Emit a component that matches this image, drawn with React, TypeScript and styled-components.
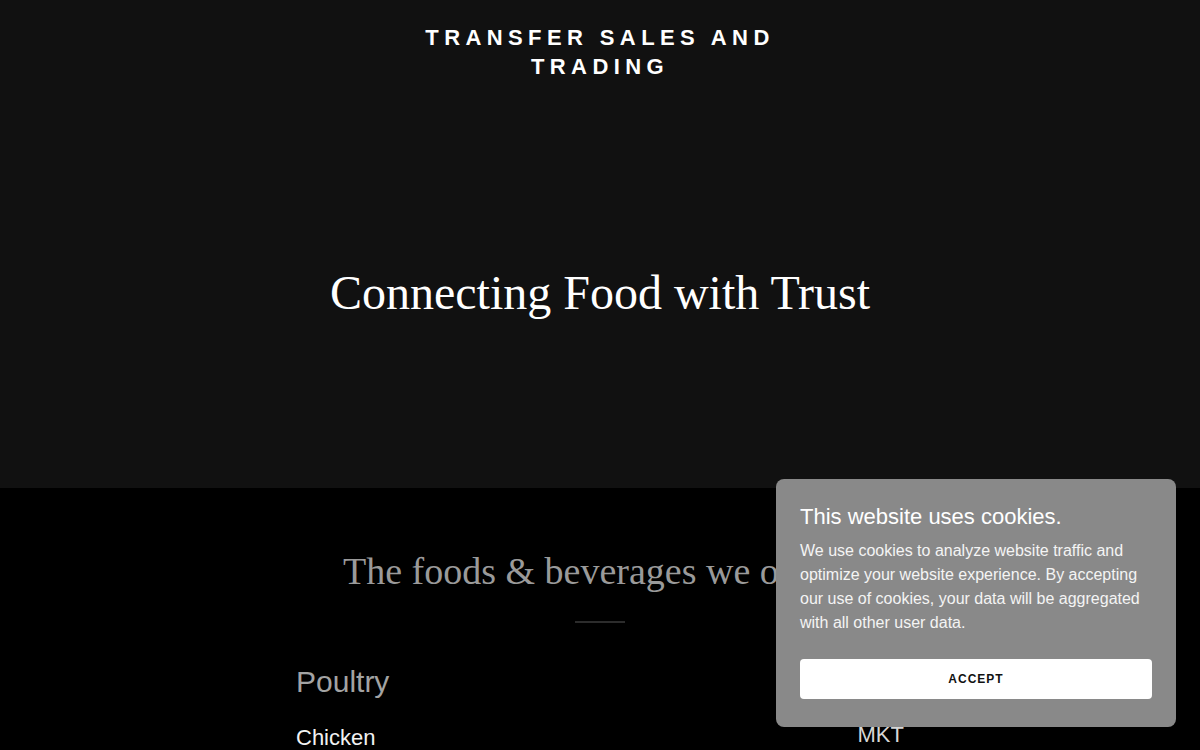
import React from "react";
import styled, { createGlobalStyle } from "styled-components";

const Global = createGlobalStyle`
  html, body { margin: 0; padding: 0; background: #000; }
  body { font-family: "Liberation Sans", Arial, sans-serif; overflow: hidden; }
  * { box-sizing: border-box; }
`;

const Page = styled.div`
  width: 1200px;
  height: 750px;
  overflow: hidden;
  position: relative;
  background: #000;
`;

const Hero = styled.section`
  height: 488px;
  background: #111111;
  display: flex;
  flex-direction: column;
`;

const Header = styled.header`
  padding: 23px 0 17px;
  display: flex;
  justify-content: center;
`;

const Brand = styled.h1`
  margin: 0;
  width: 400px;
  text-align: center;
  font-family: "Liberation Sans", Arial, sans-serif;
  font-weight: 700;
  font-size: 22px;
  line-height: 29px;
  letter-spacing: 5.4px;
  text-transform: uppercase;
  color: #ffffff;
`;

const HeroBody = styled.div`
  flex: 1;
  display: flex;
  align-items: center;
  justify-content: center;
`;

const Tagline = styled.h2`
  margin: 0;
  font-family: "Liberation Serif", "Times New Roman", serif;
  font-weight: 400;
  font-size: 48px;
  line-height: 58px;
  color: #ffffff;
`;

const Menu = styled.section`
  padding-top: 56px;
  display: flex;
  flex-direction: column;
  align-items: center;
`;

const MenuTitle = styled.h2`
  margin: 0;
  padding-right: 24px;
  font-family: "Liberation Serif", "Times New Roman", serif;
  font-weight: 400;
  font-size: 38px;
  line-height: 54px;
  color: #9a9a9a;
  white-space: nowrap;
`;

const Divider = styled.hr`
  width: 50px;
  height: 2px;
  margin: 23px 0 0;
  border: 0;
  background: #2c2c2c;
`;

const MenuBody = styled.div`
  width: 608px;
  margin-top: 41px;
`;

const Category = styled.h3`
  margin: 0;
  font-size: 30px;
  line-height: 36px;
  font-weight: 400;
  color: #a3a3a3;
`;

const Item = styled.div`
  margin-top: 23px;
  display: flex;
  justify-content: space-between;
  align-items: baseline;
`;

const ItemName = styled.span`
  font-size: 22px;
  line-height: 30px;
  color: #f2f2f2;
`;

const ItemPrice = styled.span`
  font-size: 22px;
  line-height: 30px;
  color: #d6d6d6;
  position: relative;
  top: -3px;
`;

const Cookie = styled.div`
  position: absolute;
  left: 776px;
  top: 479px;
  width: 400px;
  padding: 25px 24px 28px;
  background: #898989;
  border-radius: 8px;
  color: #ffffff;
`;

const CookieTitle = styled.div`
  font-size: 22px;
  line-height: 26px;
  color: #ffffff;
`;

const CookieText = styled.p`
  margin: 9px 0 0;
  font-size: 16px;
  line-height: 24px;
  color: #f4f4f4;
`;

const AcceptButton = styled.button`
  display: block;
  width: 100%;
  height: 40px;
  margin-top: 24px;
  border: 0;
  border-radius: 4px;
  background: #ffffff;
  color: #111;
  font-family: "Liberation Sans", Arial, sans-serif;
  font-weight: 700;
  font-size: 12px;
  letter-spacing: 1px;
  cursor: pointer;
`;

export default function App() {
  return (
    <Page>
      <Global />
      <Hero>
        <Header>
          <Brand>Transfer Sales and Trading</Brand>
        </Header>
        <HeroBody>
          <Tagline>Connecting Food with Trust</Tagline>
        </HeroBody>
      </Hero>
      <Menu>
        <MenuTitle>The foods &amp; beverages we offer</MenuTitle>
        <Divider />
        <MenuBody>
          <Category>Poultry</Category>
          <Item>
            <ItemName>Chicken</ItemName>
            <ItemPrice>MKT</ItemPrice>
          </Item>
        </MenuBody>
      </Menu>
      <Cookie>
        <CookieTitle>This website uses cookies.</CookieTitle>
        <CookieText>
          We use cookies to analyze website traffic and optimize your website
          experience. By accepting our use of cookies, your data will be
          aggregated with all other user data.
        </CookieText>
        <AcceptButton>ACCEPT</AcceptButton>
      </Cookie>
    </Page>
  );
}
